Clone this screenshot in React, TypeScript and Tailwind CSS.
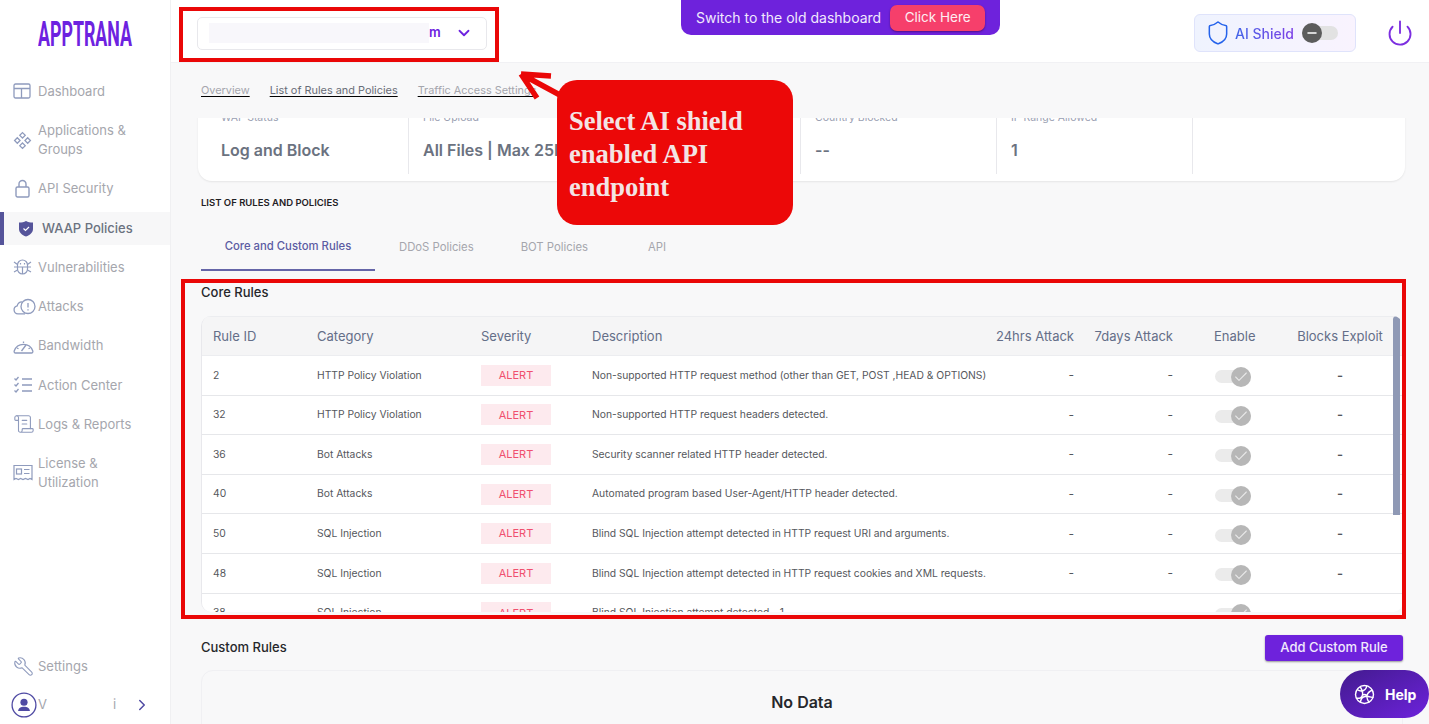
import { ChevronDown, ChevronRight, ScrollText, Shield, Power, Wrench, Check, Minus } from 'lucide-react';
import type { ReactNode } from 'react';

const DashboardIcon = () => (
  <svg width="18" height="16" viewBox="0 0 18 16" fill="none" stroke="currentColor" strokeWidth="1.3">
    <rect x="1" y="1" width="16" height="14" rx="1.5" />
    <path d="M1 5.5h16M8.5 5.5V15" />
  </svg>
);

const AppsIcon = () => (
  <svg width="19" height="19" viewBox="0 0 18 18" fill="none" stroke="currentColor" strokeWidth="1.2">
    <path d="M9 1.500l2.600 2.600L9 6.700 6.400 4.100zM4.100 6.400l2.600 2.600-2.600 2.600L1.500 9zM13.900 6.400L16.500 9l-2.600 2.600L11.300 9zM9 11.300l2.600 2.600L9 16.500l-2.600-2.600z" />
  </svg>
);

const LockIcon = () => (
  <svg width="15" height="19" viewBox="0 0 15 19" fill="none" stroke="currentColor" strokeWidth="1.4">
    <rect x="1" y="8" width="13" height="10" rx="1.5" />
    <path d="M4 8V5a3.500 3.500 0 0 1 7 0v3" />
  </svg>
);

const BugIcon = () => (
  <svg width="19" height="18" viewBox="0 0 19 18" fill="none" stroke="currentColor" strokeWidth="1.2">
    <path d="M4.500 7a5 5 0 0 1 10 0v4a5 5 0 0 1-10 0z" />
    <path d="M1 4l3.500 2.500M18 4l-3.500 2.500M1 9h17M1 14l3.500-2M18 14l-3.500-2M9.500 9v7M7.500 5v1.500M11.500 5v1.500" />
  </svg>
);

const CloudAlertIcon = () => (
  <svg width="23" height="17" viewBox="0 0 23 17" fill="none" stroke="currentColor" strokeWidth="1.3">
    <circle cx="15" cy="8.500" r="7" />
    <path d="M15 5v4.500M15 11.300v1.200" />
    <path d="M12 15.800H5a4 4 0 0 1-.8-7.900A5 5 0 0 1 9 3.800" />
  </svg>
);

const GaugeIcon = () => (
  <svg width="21" height="16" viewBox="0 0 21 16" fill="none" stroke="currentColor" strokeWidth="1.3">
    <path d="M2.500 15h16a1.500 1.500 0 0 0 1.300-2A9.800 9.800 0 0 0 1.200 13a1.500 1.500 0 0 0 1.300 2z" />
    <path d="M8.500 13l4.500-6M4 10l1.500.8M10.500 3.500v1.500M17 10l-1.500.8" />
  </svg>
);

const ChecksIcon = () => (
  <svg width="20" height="18" viewBox="0 0 20 18" fill="none" stroke="currentColor" strokeWidth="1.300">
    <path d="M1.500 2.500l1.500 1.500 2.500-3M1.500 8.500L3 10l2.500-3M1.500 14.500L3 16l2.500-3" />
    <path d="M9 3h10M9 9h10M9 15h10" />
  </svg>
);

const LicenseIcon = () => (
  <svg width="20" height="18" viewBox="0 0 20 18" fill="none" stroke="currentColor" strokeWidth="1.2">
    <path d="M1 1.500h18v14l-2-1-2 1-2.500-1-2.500 1-2.500-1-2 1-2.500-1-2 1z" />
    <rect x="3.500" y="5" width="5" height="5" />
    <path d="M11 5.500h5.500M11 9.500h5.500" />
  </svg>
);

const UserIcon = () => (
  <svg width="26" height="26" viewBox="0 0 24 24" fill="none">
    <circle cx="12" cy="12" r="11" stroke="#4f4aa3" strokeWidth="1.2" />
    <circle cx="12" cy="9.500" r="3.300" fill="#4f4aa3" />
    <path d="M6.500 17.500c.5-3 2.500-4 5.500-4s5 1 5.500 4z" fill="#4f4aa3" />
  </svg>
);

const HelpIcon = () => (
  <svg width="21" height="21" viewBox="0 0 21 21" fill="none" stroke="white" strokeWidth="1.400">
    <circle cx="10.500" cy="10.500" r="9" />
    <path d="M3 5.500c3 2 4 2 6.500 1S13 2.500 12.500 1.500M6 2.500c2 3 3 6 2.500 8.500s-3 4-6.500 3M18.500 6c-2.500 1-5 3-5.500 5.500s1 6 2.500 7M8.500 11c2-1 3-.500 4.500.500M6.500 19c0-3 1-5 3-6s3-1 5-.500 3.500 1.500 5 .500" />
  </svg>
);

type NavItem = { label: ReactNode; icon: ReactNode; active?: boolean };

const navItems: NavItem[] = [
  { label: 'Dashboard', icon: <DashboardIcon /> },
  { label: <>Applications &<br />Groups</>, icon: <AppsIcon /> },
  { label: 'API Security', icon: <span className="pl-[2px]"><LockIcon /></span> },
  {
    label: 'WAAP Policies',
    active: true,
    icon: (
      <svg width="16" height="17" viewBox="0 0 16 17">
        <path d="M1 2.500C4 2.500 6 2 8 1c2 1 4 1.500 7 1.500V9c0 3.500-3 6-7 7.500C4 15 1 12.500 1 9z" fill="#55549a" />
        <path d="M5.500 8.500l2 2 3.500-3.500" fill="none" stroke="white" strokeWidth="1.200" />
      </svg>
    ),
  },
  { label: 'Vulnerabilities', icon: <BugIcon /> },
  { label: 'Attacks', icon: <CloudAlertIcon /> },
  { label: 'Bandwidth', icon: <GaugeIcon /> },
  { label: 'Action Center', icon: <ChecksIcon /> },
  { label: 'Logs & Reports', icon: <ScrollText size={22} strokeWidth={1.2} /> },
  { label: <>License &<br />Utilization</>, icon: <LicenseIcon /> },
];

const stats = [
  { label: 'WAF Status', value: 'Log and Block', width: 'w-[211px] pl-[23px]' },
  { label: 'File Upload', value: 'All Files | Max 25MB', width: 'w-[196px] pl-[14px]' },
  { label: '', value: '', width: 'w-[196px] pl-[14px]' },
  { label: 'Country Blocked', value: '--', width: 'w-[196px] pl-[14px]' },
  { label: 'IP Range Allowed', value: '1', width: 'w-[196px] pl-[14px]' },
];

const rules = [
  ['2', 'HTTP Policy Violation', 'Non-supported HTTP request method (other than GET, POST ,HEAD & OPTIONS)'],
  ['32', 'HTTP Policy Violation', 'Non-supported HTTP request headers detected.'],
  ['36', 'Bot Attacks', 'Security scanner related HTTP header detected.'],
  ['40', 'Bot Attacks', 'Automated program based User-Agent/HTTP header detected.'],
  ['50', 'SQL Injection', 'Blind SQL Injection attempt detected in HTTP request URI and arguments.'],
  ['48', 'SQL Injection', 'Blind SQL Injection attempt detected in HTTP request cookies and XML requests.'],
  ['38', 'SQL Injection', 'Blind SQL Injection attempt detected - 1'],
];

const gridCols = 'grid grid-cols-[115px_164px_111px_383px_99px_99px_124px_86px]';

function Sidebar() {
  return (
    <aside className="flex h-full w-[171px] shrink-0 flex-col border-r border-[#f0f0f2] bg-white">
      <div className="flex h-[71.5px] shrink-0 items-start pl-[38px] pt-[19px]">
        <svg width="95" height="30" viewBox="0 0 95 30">
          <text
            x="0"
            y="27"
            textLength="94"
            lengthAdjust="spacingAndGlyphs"
            fill="#6d22e0"
            fontFamily="Roboto, sans-serif"
            fontWeight="700"
            fontSize="35"
          >
            APPTRANA
          </text>
        </svg>
      </div>

      <nav className="flex flex-col">
        {navItems.map((item, i) => (
          <div
            key={i}
            className={
              item.active
                ? 'my-[3px] flex items-center gap-2 border-l-4 border-[#55549a] bg-[#f7f7f8] py-[7px] pl-[14px] text-[13px] leading-[19.25px] font-medium text-[#6b7280]'
                : 'flex items-center py-[10px] text-[13px] leading-[19.25px] text-[#a5a6ad]'
            }
          >
            {item.active ? (
              item.icon
            ) : (
              <span className="flex h-[19px] w-[38px] shrink-0 items-center pl-[13px] text-[#8f9bbd]">{item.icon}</span>
            )}
            <span>{item.label}</span>
          </div>
        ))}
      </nav>

      <div className="mt-auto flex flex-col pb-[6px]">
        <div className="flex h-[19px] items-center text-[13px] leading-[19px] text-[#a5a6ad]">
          <span className="w-[38px] pl-[13px] text-[#8f9bbd]">
            <Wrench size={21} strokeWidth={1.2} className="-scale-x-100" />
          </span>
          Settings
        </div>
        <div className="mt-[16px] flex h-[26px] items-center pl-[11px] text-[13px] text-[#a5a6ad]">
          <UserIcon />
          <span className="ml-[1px]">V</span>
          <span className="ml-[66px]">i</span>
          <ChevronRight size={18} strokeWidth={2} className="ml-[17px] text-[#4f4aa3]" />
        </div>
      </div>
    </aside>
  );
}

function Header() {
  return (
    <header className="flex h-[63px] shrink-0 items-center border-b border-[#f1f1f4] bg-white">
      <div className="mt-[4px] ml-[26px] flex h-[33px] w-[290px] items-center rounded-[5px] border border-[#e8e8ec] pl-[11px]">
        <span className="h-[20px] w-[220px] bg-[#f8f7fb]" />
        <span className="text-[13px] font-semibold text-[#6d22e0]">m</span>
        <ChevronDown size={18} strokeWidth={2.4} className="ml-[14px] text-[#6d22e0]" />
      </div>

      <div className="ml-[194px] flex h-[35px] w-[319px] shrink-0 items-center self-start rounded-b-[10px] bg-[#6e22dc] pl-[15px]">
        <span className="text-[14px] text-[#f1e9fd]">Switch to the old dashboard</span>
        <span className="ml-[9px] flex h-[26px] w-[95px] items-center justify-center rounded-[7px] bg-[#f63f6b] text-[13.5px] text-[#fdeef2] shadow-[0_1px_2px_rgba(60,0,80,0.6)]">
          Click Here
        </span>
      </div>

      <div className="mt-[4px] ml-[194px] flex h-[38px] w-[162px] items-center rounded-[6px] border border-[#dfe3fb] bg-gradient-to-r from-[#eff3fe] to-[#f9f3fe] pl-[10px]">
        <Shield size={26} strokeWidth={1.4} className="text-[#2563eb]" />
        <span className="ml-[4px] bg-gradient-to-r from-[#3f63e8] to-[#7c3fe6] bg-clip-text text-[14px] font-medium text-transparent">
          AI Shield
        </span>
        <span className="ml-[8px] flex h-[14px] w-[36px] items-center rounded-full bg-[#e2e2e2]">
          <span className="flex h-[20px] w-[20px] shrink-0 items-center justify-center rounded-full bg-[#5c5c5c]">
            <Minus size={14} strokeWidth={2.2} className="text-white" />
          </span>
        </span>
      </div>

      <Power size={28} strokeWidth={1.6} className="mt-[4px] ml-[30px] text-[#7c2ee0]" />
    </header>
  );
}

function RuleRow({ id, category, description }: { id: string; category: string; description: string }) {
  return (
    <div className={`${gridCols} h-[39.6px] shrink-0 items-center border-b border-[#e6e7ea] bg-white text-[10.3px] text-[#55575c]`}>
      <span className="pl-[11px]">{id}</span>
      <span>{category}</span>
      <span className="flex h-[21px] w-[70px] items-center justify-center bg-[#fdeaee] text-[11px] text-[#f0506e]">ALERT</span>
      <span className="whitespace-nowrap">{description}</span>
      <span className="text-right text-[12px]">-</span>
      <span className="text-right text-[12px]">-</span>
      <span className="flex justify-start pt-[3px] pl-[42px]">
        <span className="flex h-[13px] w-[36px] items-center justify-end rounded-full bg-[#ebebeb]">
          <span className="flex h-[20px] w-[20px] shrink-0 items-center justify-center rounded-full bg-[#b7b7b7]">
            <Check size={16} strokeWidth={1.6} className="text-[#e8e8e8]" />
          </span>
        </span>
      </span>
      <span className="text-center text-[13px] font-semibold">-</span>
    </div>
  );
}

function CoreRules() {
  return (
    <div className="relative mt-[15px] flex h-[296px] flex-col overflow-hidden rounded-[10px] border-l border-[#e8e8ec]">
      <div className={`${gridCols} h-[40px] shrink-0 items-center border-y border-[#ecedf0] bg-[#f5f5f6] pt-[1px] text-[13px] text-[#646e88]`}>
        <span className="pl-[11px]">Rule ID</span>
        <span>Category</span>
        <span>Severity</span>
        <span>Description</span>
        <span className="text-right">24hrs Attack</span>
        <span className="text-right whitespace-nowrap">7days Attack</span>
        <span className="pl-[41px]">Enable</span>
        <span className="whitespace-nowrap text-center">Blocks Exploit</span>
      </div>
      {rules.map(r => (
        <RuleRow key={r[0]} id={r[0]} category={r[1]} description={r[2]} />
      ))}
      <div className="absolute top-0 left-[1191px] h-[199px] w-[7px] rounded-t-full bg-[#8f99b5]" />
    </div>
  );
}

function Annotations() {
  return (
    <>
      <div className="absolute top-[7px] left-[179px] h-[55px] w-[320px] border-4 border-[#ea0707]" />
      <div className="absolute top-[279px] left-[181px] h-[340px] w-[1225px] border-4 border-[#ea0707]" />
      <svg className="absolute top-[65px] left-[515px]" width="60" height="45" viewBox="0 0 60 45" fill="none" stroke="#ea0707" strokeWidth="5.5">
        <path d="M6 9l50 27M6 9l30 2M6 9l16 24" />
      </svg>
      <div className="absolute top-[80px] left-[557px] flex h-[145px] w-[236px] flex-col justify-center rounded-[20px] bg-[#ec0808] pt-[4px] pl-[12px] font-['Liberation_Serif',serif] text-[26.5px] leading-[33px] font-bold text-[#f3e4e4]">
        <span>Select AI shield</span>
        <span>enabled API</span>
        <span>endpoint</span>
      </div>
    </>
  );
}

export default function App() {
  return (
    <div className="relative flex h-screen w-full overflow-hidden bg-[#f8f8f9] font-[Inter,sans-serif]">
      <Sidebar />

      <main className="flex min-w-0 flex-1 flex-col">
        <Header />

        <div className="flex h-[55px] shrink-0 items-start gap-5 pt-[19px] pl-[30px] text-[10.9px] underline underline-offset-2">
          <span className="text-[#a5a6ad]">Overview</span>
          <span className="text-[#686d78]">List of Rules and Policies</span>
          <span className="text-[#a5a6ad]">Traffic Access Settings</span>
        </div>

        <div className="min-h-0 flex-1 overflow-hidden pr-[24px] pl-[27px]">
          <div className="-mt-[40px] flex h-[103px] rounded-b-[14px] bg-white shadow-[0_1px_2px_rgba(0,0,0,0.08)]">
            {stats.map((s, i) => (
              <div key={i} className={`${s.width} mb-[7px] flex flex-col border-r border-[#e8e8ec]`}>
                <span className="mt-[32px] h-[15px] text-[10.5px] leading-[15px] text-[#9aa0b2]">{s.label}</span>
                <span className="mt-[13px] text-[16px] leading-[24px] font-semibold whitespace-nowrap text-[#6b7280]">{s.value}</span>
              </div>
            ))}
          </div>

          <div className="mr-[2px] ml-[3px]">
            <p className="mt-[15px] text-[9.5px] leading-[14px] font-semibold text-[#1f2024]">LIST OF RULES AND POLICIES</p>

            <div className="mt-[15px] flex h-[46px] items-center text-[11.3px] text-[#a5a6ad]">
              <span className="flex h-full w-[174px] items-center justify-center border-b-2 border-[#6565a8] pb-[2px] font-medium text-[#5c5ca3]">
                Core and Custom Rules
              </span>
              <span className="mb-[2px] ml-[24px]">DDoS Policies</span>
              <span className="mb-[2px] ml-[47px]">BOT Policies</span>
              <span className="mb-[2px] ml-[60px]">API</span>
            </div>

            <p className="mt-[12px] text-[13px] leading-[18px] font-medium text-[#26272b]">Core Rules</p>

            <CoreRules />

            <div className="mt-[23px] flex h-[26px] items-center justify-between">
              <span className="text-[13px] font-medium text-[#26272b]">Custom Rules</span>
              <span className="flex h-[26px] w-[138px] items-center justify-center rounded-[3px] bg-[#6e22dc] text-[13px] font-medium text-[#f1e9fd] shadow-[0_1px_2px_rgba(0,0,0,0.4)]">
                Add Custom Rule
              </span>
            </div>

            <div className="mt-[9px] flex h-[120px] justify-center rounded-t-[12px] border border-[#f0f0f3] pt-[19px] text-[16px] font-semibold text-[#26272b]">
              No Data
            </div>
          </div>
        </div>
      </main>

      <Annotations />

      <div className="absolute top-[670px] right-0 flex h-[48px] w-[89px] items-center gap-[10px] rounded-[24px] bg-gradient-to-br from-[#431a8f] to-[#6d22dc] pl-[14px] text-[14px] font-bold text-white">
        <HelpIcon />
        Help
      </div>
    </div>
  );
}
